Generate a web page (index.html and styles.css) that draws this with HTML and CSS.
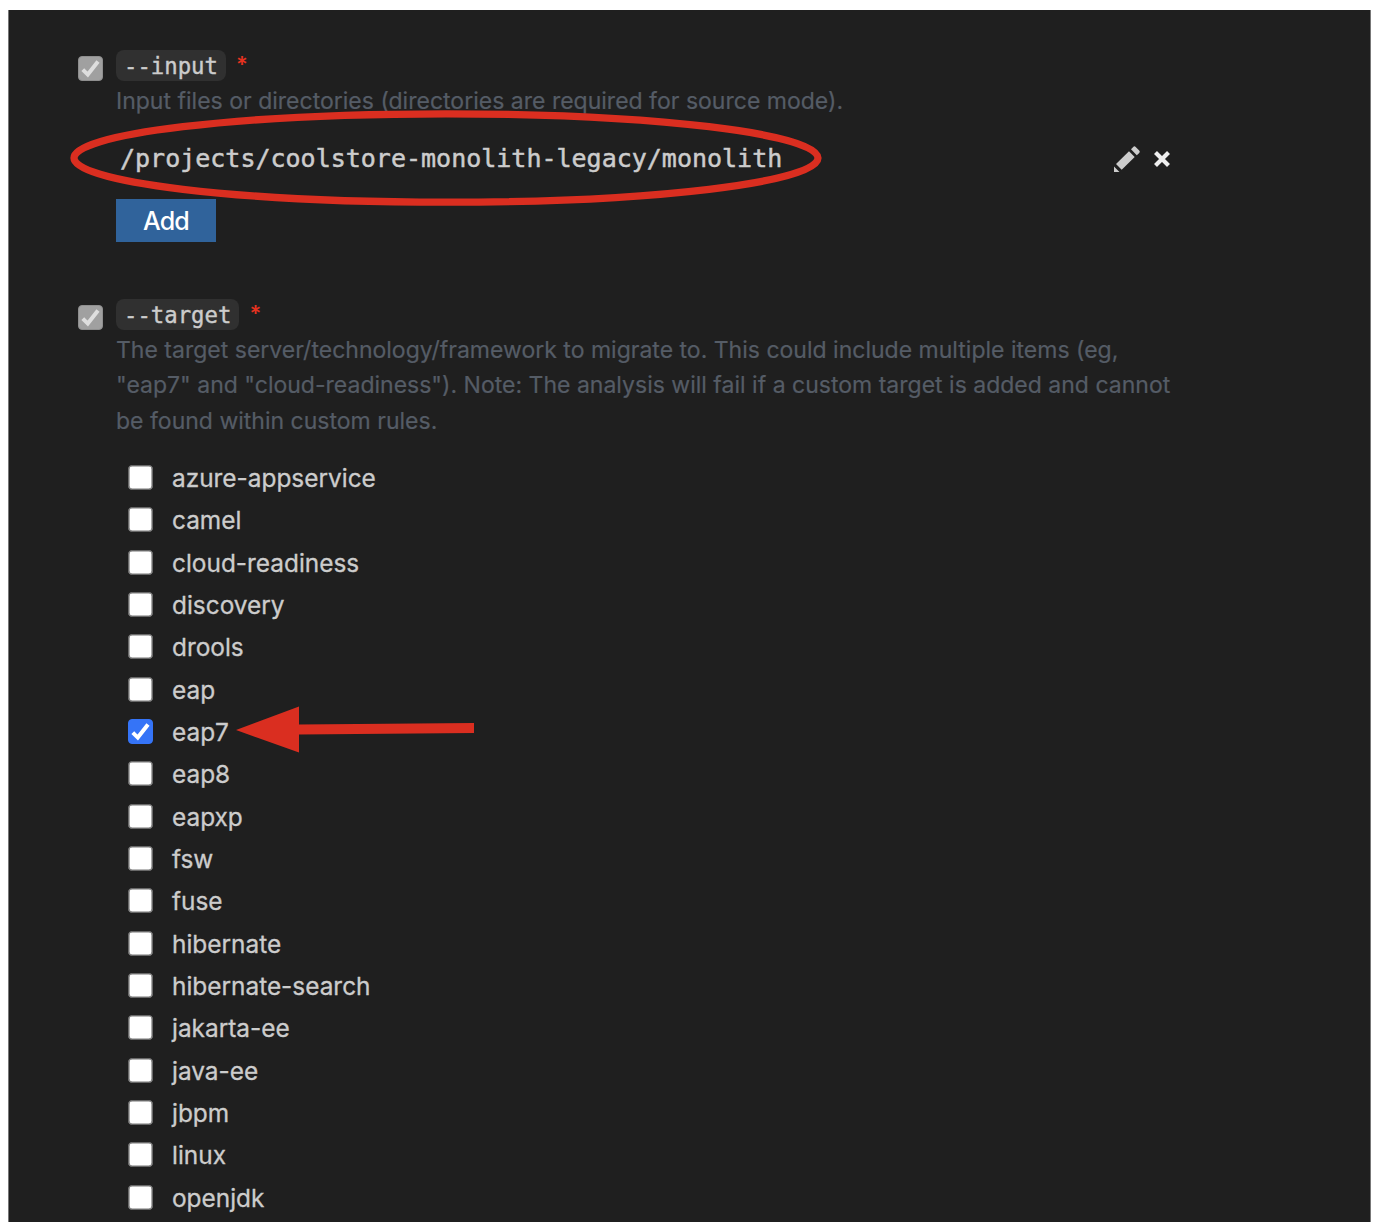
FILE: index.html
```html
<!DOCTYPE html>
<html lang="en">
<head>
<meta charset="utf-8">
<title>Analysis configuration</title>
<link rel="stylesheet" href="styles.css">
</head>
<body>
<main class="panel">
  <section class="option option-input">
    <span class="check disabled"><svg viewBox="0 0 25 25"><path d="M4.8 13.6 9.8 18.6 20 5.5"/></svg></span>
    <div class="body">
      <div class="heading"><code>--input</code><span class="required">*</span></div>
      <p class="description input-description">Input files or directories (directories are required for source mode).</p>
      <div class="path-row">
        <span class="path">/projects/coolstore-monolith-legacy/monolith</span>
        <span class="actions">
          <svg class="edit" viewBox="0 0 28 28"><path d="M1 27V21.5L6.5 27ZM3 19 16 6.2 21.7 12 8.7 24.8ZM18 4.3 20.2 2Q21.4.7 22.7 2L26.2 5.5Q27.5 6.8 26.2 8L23.8 10.3Z"/></svg>
          <svg class="remove" viewBox="0 0 18 18"><path d="M2.5 2.5 15.5 15.5M15.5 2.5 2.5 15.5"/></svg>
        </span>
      </div>
      <button class="add">Add</button>
    </div>
  </section>
  <section class="option">
    <span class="check disabled"><svg viewBox="0 0 25 25"><path d="M4.8 13.6 9.8 18.6 20 5.5"/></svg></span>
    <div class="body">
      <div class="heading"><code>--target</code><span class="required">*</span></div>
      <p class="description">The target server/technology/framework to migrate to. This could include multiple items (eg,<br>"eap7" and "cloud-readiness"). Note: The analysis will fail if a custom target is added and cannot<br>be found within custom rules.</p>
      <ul class="targets">
        <li><span class="check"></span><span class="name">azure-appservice</span></li>
        <li><span class="check"></span><span class="name">camel</span></li>
        <li><span class="check"></span><span class="name">cloud-readiness</span></li>
        <li><span class="check"></span><span class="name">discovery</span></li>
        <li><span class="check"></span><span class="name">drools</span></li>
        <li><span class="check"></span><span class="name">eap</span></li>
        <li><span class="check checked"><svg viewBox="0 0 25 25"><path d="M4.8 13.6 9.8 18.6 20 5.5"/></svg></span><span class="name">eap7</span></li>
        <li><span class="check"></span><span class="name">eap8</span></li>
        <li><span class="check"></span><span class="name">eapxp</span></li>
        <li><span class="check"></span><span class="name">fsw</span></li>
        <li><span class="check"></span><span class="name">fuse</span></li>
        <li><span class="check"></span><span class="name">hibernate</span></li>
        <li><span class="check"></span><span class="name">hibernate-search</span></li>
        <li><span class="check"></span><span class="name">jakarta-ee</span></li>
        <li><span class="check"></span><span class="name">java-ee</span></li>
        <li><span class="check"></span><span class="name">jbpm</span></li>
        <li><span class="check"></span><span class="name">linux</span></li>
        <li><span class="check"></span><span class="name">openjdk</span></li>
      </ul>
    </div>
  </section>
  <svg class="annotations" viewBox="0 0 1378 1230">
    <ellipse cx="446" cy="158" rx="372" ry="44.2"/>
    <path d="M236 730 299 706.5V724.5L474 723V733L299 734.5V752.5Z"/>
  </svg>
</main>
</body>
</html>
```
FILE: styles.css
```css
* { box-sizing: border-box; }
body { margin: 0; background: #fff; font-family: Inter, sans-serif; color: #ccc; }
.panel {
  width: 1363px; height: 1212px; margin: 10px 0 0 8px; padding: 40px 0 0 69px;
  background: #1f1f1f; border-left: 1px solid #777; border-right: 1px solid #777;
  overflow: hidden;
}
.option { display: flex; gap: 13px; }
.option-input { height: 249px; }
.body { width: 1055px; }
.check {
  flex: none; display: block; width: 25px; height: 25px;
  background: #fff; border: 1px solid #686868; border-radius: 4px;
  box-shadow: inset 0 0 0 .6px #777;
}
.option > .check { margin-top: 6px; }
.check svg { display: block; width: 25px; height: 25px; margin: -1px; fill: none; stroke: #fff; stroke-width: 4; }
.check.disabled { background: #a0a0a0; border-color: #8e8e8e; box-shadow: none; }
.check.disabled svg { stroke: #dedede; }
.check.checked { background: #3574f7; border-color: #3574f7; box-shadow: none; }
.heading { display: flex; height: 31px; }
code {
  height: 31px; padding: 1px 8px 0; border-radius: 8px; background: #303030;
  font: 22.3px/31px "DejaVu Sans Mono", monospace;
  -webkit-text-stroke: .4px #ccc;
}
.required { margin-left: 10px; font-size: 22px; font-weight: 600; line-height: 29px; color: #e5321f; }
.description { margin: 3px 0 0; color: #555c66; font-size: 23.03px; line-height: 35.4px; white-space: nowrap; -webkit-text-stroke: .2px #555c66; }
.input-description { height: 35px; }
.path-row { display: flex; justify-content: space-between; align-items: center; height: 44px; margin-top: 17px; padding-left: 4px; }
.path { padding-top: 1px; font: 25px/44px "DejaVu Sans Mono", monospace; -webkit-text-stroke: .5px #ccc; }
.actions { display: flex; align-items: center; gap: 12px; padding-top: 1px; }
.edit { width: 28px; height: 28px; fill: #ccc; }
.remove { width: 18px; height: 18px; fill: none; stroke: #eee; stroke-width: 4.2; }
.add {
  display: block; width: 100px; height: 43px; margin-top: 19px; padding: 1px 0 0; border: 0;
  background: #30639b; color: #fff; font: 500 25px/42px Inter, sans-serif; letter-spacing: -.8px;
}
.targets { list-style: none; margin: 17px 0 0; padding: 0 0 0 12px; }
.targets li { display: flex; align-items: center; gap: 19px; height: 42.35px; font-size: 24.4px; }
.name { padding-top: 1px; -webkit-text-stroke: .3px #ccc; }
.annotations { position: absolute; left: 0; top: 0; width: 1378px; height: 1230px; fill: #da2e20; pointer-events: none; }
.annotations ellipse { fill: none; stroke: #da2e20; stroke-width: 7.3; }
```
